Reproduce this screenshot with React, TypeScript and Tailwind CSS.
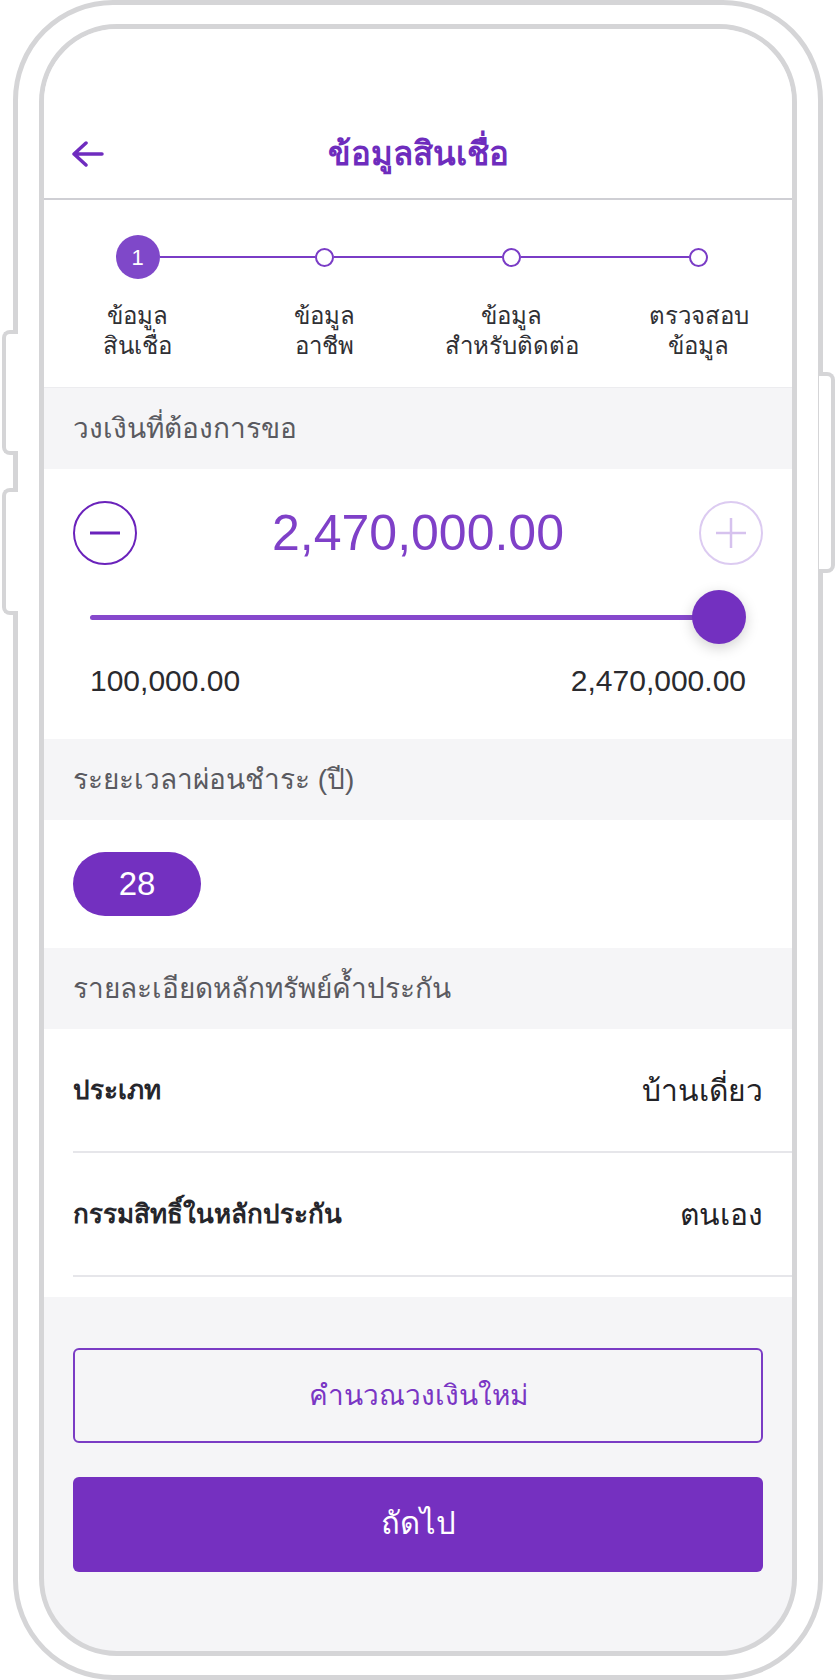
import React from "react";

const steps = [
  { lines: ["ข้อมูล", "สินเชื่อ"], active: true },
  { lines: ["ข้อมูล", "อาชีพ"] },
  { lines: ["ข้อมูล", "สำหรับติดต่อ"] },
  { lines: ["ตรวจสอบ", "ข้อมูล"] },
];

function SectionHeader({ children }: { children: React.ReactNode }) {
  return (
    <div className="flex h-[81px] items-center bg-[#f5f5f7] px-[29px] text-[28px] text-[#5a5a60]">
      {children}
    </div>
  );
}

function InfoRow({ label, value }: { label: string; value: string }) {
  return (
    <div className="ml-[29px] flex h-[124px] items-center justify-between border-b-2 border-[#e6e6ea] pr-[29px]">
      <span className="text-[26px] font-bold text-[#26262b]">{label}</span>
      <span className="text-[30px] text-[#222226]">{value}</span>
    </div>
  );
}

export default function App() {
  return (
    <div className="relative h-[1680px] w-[837px] bg-white font-['Liberation_Sans','Noto_Sans',sans-serif]">
      {/* side buttons */}
      <div className="absolute left-[2px] top-[330px] h-[125px] w-[16px] rounded-l-[8px] border-[4px] border-r-0 border-[#d5d5d7] bg-white" />
      <div className="absolute left-[2px] top-[488px] h-[127px] w-[16px] rounded-l-[8px] border-[4px] border-r-0 border-[#d5d5d7] bg-white" />
      <div className="absolute left-[819px] top-[372px] h-[201px] w-[16px] rounded-r-[8px] border-[4px] border-l-0 border-[#d5d5d7] bg-white" />

      <div className="ml-[13px] h-[1680px] w-[810px] rounded-[100px] border-[5px] border-[#d5d5d7] pl-[21px] pt-[19px]">
        <div className="flex h-[1632px] w-[758px] flex-col overflow-hidden rounded-[78px] border-[5px] border-[#d5d5d7] bg-[#f5f5f7]">
          <div className="bg-white pt-[81px]">
            {/* header */}
            <div className="grid h-[90px] grid-cols-[1fr_auto_1fr] items-center border-b-2 border-[#cfcfd4]">
              <div className="pl-[27px]">
                <svg width="34" height="26" viewBox="0 0 34 26" fill="none" stroke="#6f2cbf" strokeWidth="3.5" strokeLinecap="round" strokeLinejoin="round">
                  <path d="M15 2 L3 13 L15 24 M3 13 H31" />
                </svg>
              </div>
              <h1 className="text-[33px] font-bold text-[#6e2cbd]">ข้อมูลสินเชื่อ</h1>
              <div />
            </div>

            {/* stepper */}
            <div className="grid grid-cols-4 border-b border-[#ececef] pb-[26px] pt-[35px]">
              {steps.map((s, i) => (
                <div key={i} className="flex flex-col items-center">
                  <div className="flex h-[44px] w-full items-center">
                    <div className={`h-[2px] flex-1 ${i === 0 ? "" : "bg-[#7a3cc6]"}`} />
                    {s.active ? (
                      <div className="flex h-[44px] w-[44px] items-center justify-center rounded-full bg-[#7f48c9] text-[22px] text-white">
                        1
                      </div>
                    ) : (
                      <div className="h-[19px] w-[19px] rounded-full border-2 border-[#7a3cc6] bg-white" />
                    )}
                    <div className={`h-[2px] flex-1 ${i === 3 ? "" : "bg-[#7a3cc6]"}`} />
                  </div>
                  <div className="mt-[22px] text-center text-[24px] leading-[30px] text-[#303034]">
                    {s.lines.map((l) => (
                      <div key={l}>{l}</div>
                    ))}
                  </div>
                </div>
              ))}
            </div>
          </div>

          <SectionHeader>วงเงินที่ต้องการขอ</SectionHeader>

          {/* amount */}
          <div className="bg-white px-[29px] pb-[43px] pt-[32px]">
            <div className="flex h-[64px] items-center justify-between">
              <svg width="64" height="64" viewBox="0 0 64 64" fill="none">
                <circle cx="32" cy="32" r="31" stroke="#6a22bb" strokeWidth="2" />
                <path d="M17 32 H47" stroke="#6a22bb" strokeWidth="3" />
              </svg>
              <span className="text-[50px] text-[#7f40c8]">2,470,000.00</span>
              <svg width="64" height="64" viewBox="0 0 64 64" fill="none">
                <circle cx="32" cy="32" r="31" stroke="#dccbf1" strokeWidth="2" />
                <path d="M17 32 H47 M32 17 V47" stroke="#d6c2ee" strokeWidth="2.5" />
              </svg>
            </div>
            <div className="mx-[17px] mt-[25px] flex h-[54px] items-center">
              <div className="h-[5px] flex-1 rounded-full bg-[#8648cc]" />
              <div className="-ml-[27px] h-[54px] w-[54px] rounded-full bg-[#7330c0] shadow-[0_4px_14px_rgba(0,0,0,0.18)]" />
            </div>
            <div className="mx-[17px] mt-[20px] flex h-[32px] items-center justify-between text-[30px] text-[#2a2a2e]">
              <span>100,000.00</span>
              <span>2,470,000.00</span>
            </div>
          </div>

          <SectionHeader>ระยะเวลาผ่อนชำระ (ปี)</SectionHeader>

          <div className="bg-white px-[29px] py-[32px]">
            <div className="flex h-[64px] w-[128px] items-center justify-center rounded-full bg-[#7330c0] text-[33px] text-white">
              28
            </div>
          </div>

          <SectionHeader>รายละเอียดหลักทรัพย์ค้ำประกัน</SectionHeader>

          <div className="bg-white pb-[20px]">
            <InfoRow label="ประเภท" value="บ้านเดี่ยว" />
            <InfoRow label="กรรมสิทธิ์ในหลักประกัน" value="ตนเอง" />
          </div>

          {/* footer buttons */}
          <div className="flex flex-col gap-[34px] px-[29px] pt-[51px]">
            <button className="flex h-[95px] items-center justify-center rounded-[6px] border-2 border-[#7a3cc4] text-[28px] font-medium text-[#7a36c4]">
              คำนวณวงเงินใหม่
            </button>
            <button className="flex h-[95px] items-center justify-center rounded-[6px] bg-[#7530c0] text-[31px] font-medium text-white">
              ถัดไป
            </button>
          </div>
        </div>
      </div>
    </div>
  );
}
